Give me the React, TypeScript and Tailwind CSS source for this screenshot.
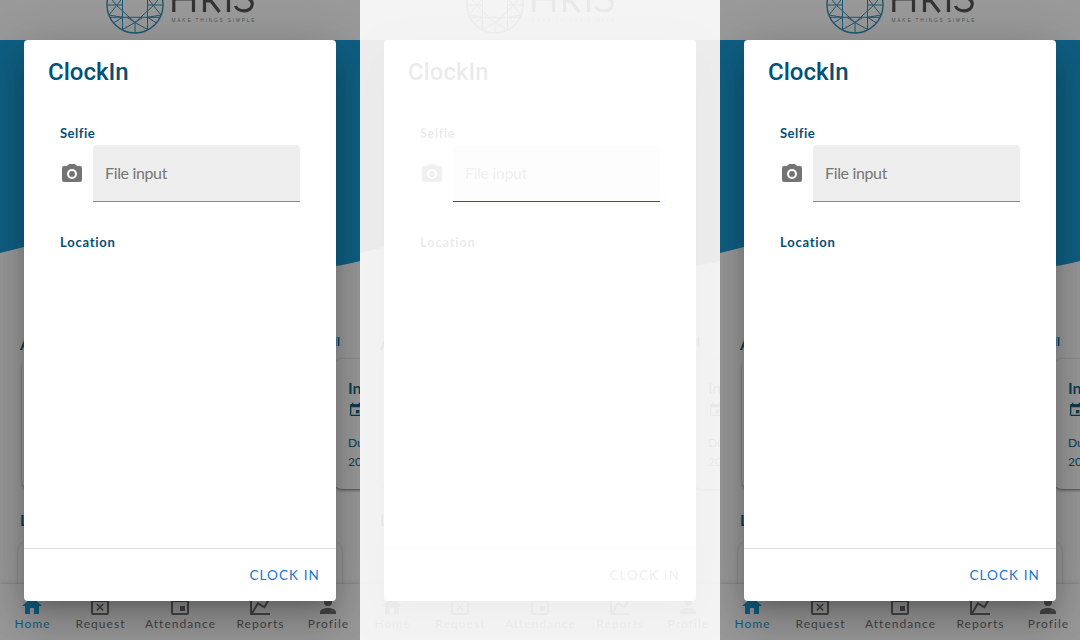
import React from "react";

const labelFont = "font-['Lato','Liberation_Sans',sans-serif]";

function Logo() {
  return (
    <svg className="absolute left-[104px] top-0" width="160" height="40" viewBox="104 0 160 40" fill="none">
      <g stroke="#1c86b8" strokeWidth="1">
        <circle cx="135" cy="5" r="28" strokeWidth="1.4" />
        <path d="M107 5H122.500M147.500 5H163M122.500 -2V29.500M147.500 -2V29.500M110 17.300H160M110 -3L116 5L135 22.500L154 5L160 -3M122.500 -2L109 15M147.500 -2L161 15M109 15L122.500 17.300M161 15L147.500 17.300M122.500 17.300L113.500 23M147.500 17.300L156.500 23M122.500 29.500L135 22.500L147.500 29.500M135 22.500V33M135 22.500L127 17.300M135 22.500L143 17.300" />
      </g>
      <g stroke="#454545" strokeWidth="3.200">
        <path d="M173.800 -10V12M193.500 -10V12M173.800 -1.200H193.500M204.500 -10V12M204.500 1H211L219.500 12M228.500 -10V12M235.500 6C237.500 12 251.500 13.500 252.300 4C252.300 -1 247 -3 240 -5" />
      </g>
      <text x="171.500" y="22" fontFamily="Liberation Sans, sans-serif" fontSize="4.800" textLength="83" lengthAdjust="spacing" fill="#858585">MAKE THINGS SIMPLE</text>
    </svg>
  );
}

const tabs = [
  { name: "Home", box: "w-[64px]", d: "M10 20v-6h4v6h5v-8h3L12 3 2 12h3v8z" },
  { name: "Request", box: "w-[72px]", d: "M19 19H5V8h14m0-5h-1V1h-2v2H8V1H6v2H5c-1.110 0-2 .890-2 2v14a2 2 0 0 0 2 2h14a2 2 0 0 0 2-2V5a2 2 0 0 0-2-2M9.300 17l2.700-2.700 2.700 2.700 1-1-2.700-2.700 2.700-2.700-1-1-2.700 2.700-2.700-2.700-1 1 2.700 2.700-2.700 2.700z" },
  { name: "Attendance", box: "w-[88px]", d: "M19 19H5V8h14m-3-7v2H8V1H6v2H5c-1.110 0-2 .890-2 2v14a2 2 0 0 0 2 2h14a2 2 0 0 0 2-2V5a2 2 0 0 0-2-2h-1V1m-1 11h-5v5h5z" },
  { name: "Reports", box: "w-[72px]", d: "M16 11.780l4.240-7.330 1.730 1-5.230 9.050-6.510-3.750L5.460 19H22v2H2V3h2v14.540L9.500 8z" },
  { name: "Profile", box: "w-[64px]", d: "M12 4a4 4 0 0 1 4 4 4 4 0 0 1-4 4 4 4 0 0 1-4-4 4 4 0 0 1 4-4m0 10c4.420 0 8 1.790 8 4v2H4v-2c0-2.210 3.580-4 8-4z" },
];

function Page() {
  return (
    <div className="relative h-[640px] w-[360px] overflow-hidden bg-white">
      <header className="h-10"><Logo /></header>
      <svg className="block" width="360" height="228" viewBox="0 0 360 228">
        <path d="M0 0H360V221Q310 235 230 225C150 190 90 185 24 207L0 213Z" fill="#0094d6" />
      </svg>
      <div className={`${labelFont} flex justify-between pl-5 pr-[20px] pt-[64px] text-[#005b88]`}>
        <b className="text-[16px] leading-6">Announcement</b>
        <b className="pt-px text-[12px] leading-[18px]">See All</b>
      </div>
      <div className="flex gap-3 pl-[22px] pt-[3px]">
        <div className="h-[130px] w-[300px] shrink-0 rounded-lg bg-white shadow-[0_2px_3px_rgba(0,0,0,0.35)]" />
        <div className={`${labelFont} h-[130px] w-[200px] shrink-0 rounded-lg bg-white pl-[14px] pt-[17px] text-[12px] leading-[19px] text-[#005b88] shadow-[0_1px_3px_rgba(0,0,0,0.6)]`}>
          <b className="block text-[16px] leading-6">Information</b>
          <svg className="mt-[2px]" width="16" height="16" viewBox="0 0 24 24" fill="#005176"><path d={tabs[2].d} /></svg>
          <div className="pt-[15px]">Due date</div>
          <div>2021</div>
        </div>
      </div>
      <b className={`${labelFont} block pl-5 pt-[19px] text-[16px] leading-6 text-[#005b88]`}>Leave</b>
      <div className="ml-[17px] mt-[8px] h-[120px] w-[326px] rounded-[12px] border border-gray-200 shadow-sm" />
      <nav className="absolute inset-x-0 bottom-0 flex h-14 bg-white shadow-[0_0_3px_rgba(0,0,0,0.3)]">
        {tabs.map((tab, i) => (
          <div key={tab.name} className={`${tab.box} ${i === 0 ? "text-[#0094d6]" : "text-[#666666]"} flex shrink-0 flex-col items-center pt-[10px]`}>
            <svg width="24" height="24" viewBox="0 0 24 24" fill="currentColor"><path d={tab.d} /></svg>
            <span className={`${labelFont} pl-px text-[12px] leading-[12px] tracking-[1.050px]`}>{tab.name}</span>
          </div>
        ))}
      </nav>
    </div>
  );
}

function Screen() {
  return (
    <div className="relative h-[640px] w-[360px] overflow-hidden bg-white">
      <Page />
      <div className="absolute inset-0 flex items-start bg-[#212121]/46 px-6 pt-10">
        <section className="flex h-[561px] w-full flex-col rounded bg-white text-[#005176] shadow-[0_11px_15px_-7px_rgba(0,0,0,0.2),0_24px_38px_3px_rgba(0,0,0,0.14),0_9px_46px_8px_rgba(0,0,0,0.12)]">
          <h2 className="px-6 pt-4 font-['Roboto',sans-serif] text-[24px] font-medium leading-8">ClockIn</h2>
          <div className={`${labelFont} flex-1 px-9 pt-[36px]`}>
            <div className="text-[13px] font-bold leading-[18px] tracking-[0.500px]">Selfie</div>
            <div className="flex pt-[3px]">
              <svg className="mt-[17px] shrink-0" width="24" height="24" viewBox="0 0 24 24" fill="#757575">
                <path d="M4 4h3l2-2h6l2 2h3a2 2 0 0 1 2 2v12a2 2 0 0 1-2 2H4a2 2 0 0 1-2-2V6a2 2 0 0 1 2-2m8 3a5 5 0 1 0 0 10 5 5 0 0 0 0-10m0 2a3 3 0 1 1 0 6 3 3 0 0 1 0-6z" />
              </svg>
              <div className="ml-[9px] h-[57px] w-[207px] rounded-t border-b border-[#8a8a8a] bg-[#eeeeee] pl-3 text-[16px] leading-[55px] tracking-[-0.350px] text-[#757575]">File input</div>
            </div>
            <div className="pt-[30px] text-[13px] font-bold leading-[20px] tracking-[0.750px]">Location</div>
          </div>
          <div className={`${labelFont} flex h-[53px] items-center justify-end border-t border-[#dedede] pr-4 text-[13.500px] tracking-[1.100px] text-[#1976d2]`}>CLOCK IN</div>
        </section>
      </div>
    </div>
  );
}

export default function App() {
  return (
    <main className="flex h-[640px] w-[1080px] overflow-hidden">
      <Screen />
      <div className="relative h-[640px] w-[360px] bg-white">
        <div className="opacity-10 grayscale"><Screen /></div>
        <div className="absolute left-[93px] top-[201px] h-px w-[207px] bg-[#ff0000]" />
      </div>
      <Screen />
    </main>
  );
}
